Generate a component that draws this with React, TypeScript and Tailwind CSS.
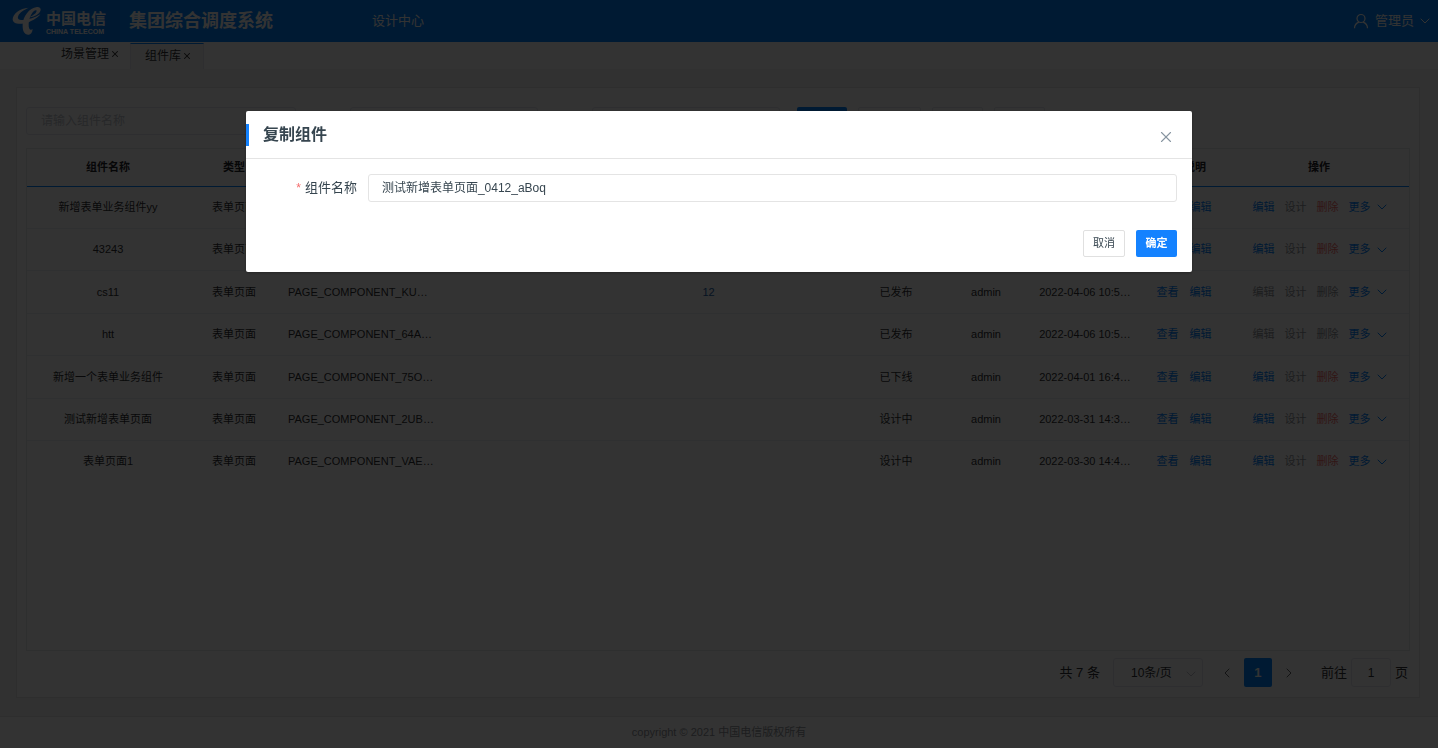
import React from "react";
import { ChevronDown, ChevronLeft, ChevronRight, X } from "lucide-react";

interface ComponentRow {
  name: string;
  code?: string;
  version?: string;
  status?: string;
  creator?: string;
  createdAt?: string;
  locked?: boolean;
}

const rows: ComponentRow[] = [
  { name: "新增表单业务组件yy" },
  { name: "43243" },
  {
    name: "cs11",
    code: "PAGE_COMPONENT_KU…",
    version: "12",
    status: "已发布",
    creator: "admin",
    createdAt: "2022-04-06 10:5…",
    locked: true,
  },
  {
    name: "htt",
    code: "PAGE_COMPONENT_64A…",
    status: "已发布",
    creator: "admin",
    createdAt: "2022-04-06 10:5…",
    locked: true,
  },
  {
    name: "新增一个表单业务组件",
    code: "PAGE_COMPONENT_75O…",
    status: "已下线",
    creator: "admin",
    createdAt: "2022-04-01 16:4…",
  },
  {
    name: "测试新增表单页面",
    code: "PAGE_COMPONENT_2UB…",
    status: "设计中",
    creator: "admin",
    createdAt: "2022-03-31 14:3…",
  },
  {
    name: "表单页面1",
    code: "PAGE_COMPONENT_VAE…",
    status: "设计中",
    creator: "admin",
    createdAt: "2022-03-30 14:4…",
  },
];

const Logo = () => (
  <div className="flex h-full w-[120px] items-center gap-1 bg-[#0078f0] pl-3 text-white">
    <svg viewBox="37 21 90 90" className="size-[30px]" fill="currentColor">
      <path d="M87 26C60 27 39 46 39 61c0 16 27 17 51 7 15-6 28-15 32-22-16 10-36 16-50 17-16 1-20-5-16-13 4-10 18-18 31-24z" />
      <path d="M69 76C70 54 88 26 112 24c14-1 14 12 4 20-8 7-18 10-26 11 14-7 24-17 20-21-6-4-22 16-23 40-1 16 5 22 12 16-1 12-7 18-13 17-12 0-18-11-17-31z" />
    </svg>
    <div className="flex flex-col pt-1">
      <span className="text-[15px] leading-[18px] font-bold">中国电信</span>
      <span className="text-[7px] leading-[8px] font-bold whitespace-nowrap">
        CHINA TELECOM
      </span>
    </div>
  </div>
);

const Header = () => (
  <header className="flex h-[42px] items-center bg-[#0082ff] text-[13px] text-white">
    <Logo />
    <h1 className="ml-[9px] text-[18px] font-bold">集团综合调度系统</h1>
    <nav className="ml-[99px]">
      <a href="#design">设计中心</a>
    </nav>
    <button type="button" className="mr-[5px] ml-auto flex items-center">
      <svg
        viewBox="0 0 16 16"
        className="mr-[6px] size-4"
        fill="none"
        stroke="currentColor"
        strokeWidth="1.2"
      >
        <circle cx="8" cy="5.500" r="4" />
        <path d="M1.500 15.200c0-3.400 2-5.200 4.400-6.100M14.500 15.200c0-3.400-2-5.200-4.400-6.100" />
      </svg>
      管理员
      <ChevronDown className="ml-[3px] size-4" strokeWidth={1.5} />
    </button>
  </header>
);

const PageTabs = () => (
  <div className="flex h-[27px] items-start bg-white pl-[50px] text-[12px] text-[#303133]">
    <div className="flex h-6 items-center gap-px pr-[10px] pl-[11px]">
      <a href="#scene">场景管理</a>
      <button type="button" aria-label="关闭场景管理">
        <X className="size-[10px]" strokeWidth={2.5} />
      </button>
    </div>
    <div className="mt-px flex h-[26px] items-center gap-px border-x border-t border-x-[#e4e7ed] border-t-[#0082ff] bg-[#f5f5f5] pr-[11px] pb-px pl-[14px]">
      <a href="#library">组件库</a>
      <button type="button" aria-label="关闭组件库">
        <X className="size-[10px]" strokeWidth={2.5} />
      </button>
    </div>
  </div>
);

const SearchBar = () => (
  <form className="flex h-7 items-center text-[12px]">
    <input
      aria-label="组件名称"
      placeholder="请输入组件名称"
      className="h-full w-[270px] rounded-[3px] border border-[#e4e7ed] px-[14px] placeholder:text-[#c0c4cc]"
    />
    <select
      aria-label="类型"
      className="ml-[54px] h-full w-[188px] appearance-none rounded-[3px] border border-[#e4e7ed]"
    />
    <select
      aria-label="状态"
      className="ml-[54px] h-full w-[188px] appearance-none rounded-[3px] border border-[#e4e7ed]"
    />
    <button
      type="submit"
      aria-label="查询"
      className="ml-[17px] h-full w-[50px] rounded-[2px] bg-[#0082ff]"
    />
    <button
      type="button"
      aria-label="新增"
      className="ml-[11px] h-full w-[63px] rounded-[2px] border border-[#e4e7ed]"
    />
    <button
      type="button"
      aria-label="导入"
      className="ml-[11px] h-full w-[51px] rounded-[2px] border border-[#e4e7ed]"
    />
    <button
      type="button"
      aria-label="导出"
      className="ml-[11px] h-full w-[51px] rounded-[2px] border border-[#e4e7ed]"
    />
  </form>
);

const RowActions = ({ locked }: { locked?: boolean }) => (
  <div className="flex items-center justify-center gap-[10px] pl-1">
    <button
      type="button"
      disabled={locked}
      className="text-[#0082ff] disabled:text-[#909399]"
    >
      编辑
    </button>
    <button type="button" disabled className="text-[#909399]">
      设计
    </button>
    <button
      type="button"
      disabled={locked}
      className="text-[#f56c6c] disabled:text-[#909399]"
    >
      删除
    </button>
    <button
      type="button"
      className="flex items-center gap-[3px] text-[#0082ff]"
    >
      更多
      <ChevronDown className="size-4" strokeWidth={1.5} />
    </button>
  </div>
);

const ComponentTable = () => (
  <div className="flex-1 border border-[#e6e8ec]">
    <table className="h-[333px] w-full table-fixed text-center text-[11px] text-[#303133]">
      <colgroup>
        <col className="w-[162px]" />
        <col className="w-[90px]" />
        <col className="w-[161px]" />
        <col className="w-[126px]" />
        <col />
        <col className="w-[90px]" />
        <col className="w-[90px]" />
        <col className="w-[108px]" />
        <col className="w-[90px]" />
        <col className="w-[180px]" />
      </colgroup>
      <thead>
        <tr className="h-[37px] border-b border-[#0082ff] text-[#1f2329]">
          <th>组件名称</th>
          <th>类型</th>
          <th />
          <th />
          <th />
          <th />
          <th />
          <th />
          <th>使用说明</th>
          <th>操作</th>
        </tr>
      </thead>
      <tbody>
        {rows.map((row) => (
          <tr
            key={row.name}
            className="border-b border-[#ebeef5] last:border-b-0"
          >
            <td>{row.name}</td>
            <td>表单页面</td>
            <td className="pl-[9px] text-left whitespace-nowrap">{row.code}</td>
            <td />
            <td>
              {row.version && (
                <a href="#version" className="text-[#1a5fa8]">
                  {row.version}
                </a>
              )}
            </td>
            <td>{row.status}</td>
            <td>{row.creator}</td>
            <td className="whitespace-nowrap">{row.createdAt}</td>
            <td>
              <div className="flex justify-center gap-[11px] text-[#0082ff]">
                <button type="button">查看</button>
                <button type="button">编辑</button>
              </div>
            </td>
            <td>
              <RowActions locked={row.locked} />
            </td>
          </tr>
        ))}
      </tbody>
    </table>
  </div>
);

const Pagination = () => (
  <div className="mt-[7px] flex h-[29px] items-center justify-end pr-[2px] text-[13px] text-[#303133]">
    <span>共 7 条</span>
    <div className="relative ml-[13px] h-full">
      <select
        aria-label="每页条数"
        className="h-full w-[90px] appearance-none rounded-[3px] border border-[#e4e7ed] pl-[17px] text-[12px]"
      >
        <option>10条/页</option>
      </select>
      <ChevronDown
        className="pointer-events-none absolute top-[8px] right-1 size-4 text-[#c0c4cc]"
        strokeWidth={1.5}
      />
    </div>
    <button type="button" aria-label="上一页" className="ml-4 text-[#606266]">
      <ChevronLeft className="size-4" strokeWidth={1.5} />
    </button>
    <button
      type="button"
      className="ml-[9px] h-full w-7 rounded-[2px] bg-[#0082ff] font-bold text-white"
    >
      1
    </button>
    <button
      type="button"
      aria-label="下一页"
      className="ml-[9px] text-[#606266]"
    >
      <ChevronRight className="size-4" strokeWidth={1.5} />
    </button>
    <label className="ml-6 flex h-full items-center">
      前往
      <input
        defaultValue="1"
        className="mx-1 h-full w-10 rounded-[3px] border border-[#e4e7ed] text-center text-[12px]"
      />
      页
    </label>
  </div>
);

const CopyDialog = () => (
  <div className="fixed inset-0 flex items-start justify-center bg-black/80">
    <div
      role="dialog"
      aria-modal="true"
      aria-labelledby="copy-title"
      className="mt-[111px] w-[65.8%] rounded-[2px] bg-white text-[#36454f] shadow-[0_1px_3px_rgba(0,0,0,0.3)]"
    >
      <div className="flex h-12 items-center border-b border-[#e4e4e4] pr-[17px]">
        <span className="h-[22px] w-[3px] bg-[#1482ff]" />
        <h2 id="copy-title" className="ml-[14px] text-[16px] font-bold">
          复制组件
        </h2>
        <button
          type="button"
          aria-label="关闭"
          className="mt-1 ml-auto text-[#8795a1]"
        >
          <X className="size-[18px]" strokeWidth={1.5} />
        </button>
      </div>
      <form className="p-[15px]">
        <div className="flex items-center">
          <label
            htmlFor="component-name"
            className="w-24 text-right text-[13px]"
          >
            <span className="mr-1 text-[12px] text-[#f56c6c]">*</span>
            组件名称
          </label>
          <input
            id="component-name"
            defaultValue="测试新增表单页面_0412_aBoq"
            className="ml-[11px] h-7 flex-1 rounded-[3px] border border-[#e4e4e4] px-[13px] pb-[3px] text-[12px]"
          />
        </div>
        <div className="mt-7 flex justify-end gap-[11px] text-[11px]">
          <button
            type="button"
            className="h-[27px] w-[42px] rounded-[2px] border border-[#e0e0e0]"
          >
            取消
          </button>
          <button
            type="submit"
            className="h-[27px] w-[41px] rounded-[2px] bg-[#1482ff] font-bold text-white"
          >
            确定
          </button>
        </div>
      </form>
    </div>
  </div>
);

const App = () => {
  return (
    <div className="flex min-h-screen flex-col bg-[#f5f5f5] font-['Liberation_Sans','Noto_Sans_CJK_SC',sans-serif]">
      <Header />
      <PageTabs />
      <main className="mt-[18px] mr-[18px] mb-[18px] ml-4 flex flex-1 flex-col border border-[#e6e6e6] bg-white px-[9px] pt-[19px] pb-[10px]">
        <SearchBar />
        <div className="mt-[13px] flex flex-1 flex-col">
          <ComponentTable />
        </div>
        <Pagination />
      </main>
      <footer className="flex h-8 items-center justify-center border-t border-[#e6e6e6] bg-white text-[11px] text-[#909399]">
        copyright © 2021 中国电信版权所有
      </footer>
      <CopyDialog />
    </div>
  );
};

export default App;
